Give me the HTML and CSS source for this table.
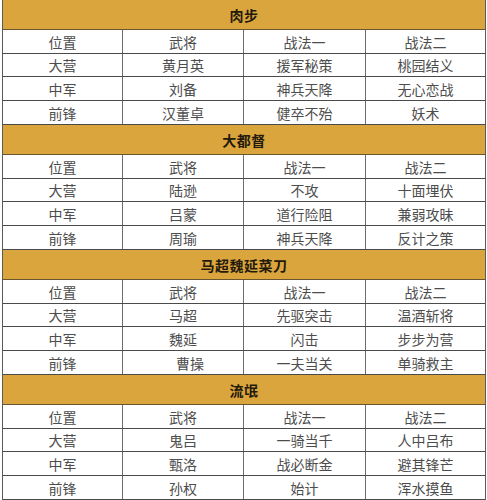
FILE: index.html
```html
<!DOCTYPE html>
<html lang="zh-CN">
<head>
<meta charset="utf-8">
<link rel="stylesheet" href="styles.css">
</head>
<body>
<div class="sheet">
  <section class="block">
    <div class="head">肉步</div>
    <div class="row r1"><span>位置</span><span>武将</span><span>战法一</span><span>战法二</span></div>
    <div class="row r2"><span>大营</span><span>黄月英</span><span>援军秘策</span><span>桃园结义</span></div>
    <div class="row r3"><span>中军</span><span>刘备</span><span>神兵天降</span><span>无心恋战</span></div>
    <div class="row r4"><span>前锋</span><span>汉董卓</span><span>健卒不殆</span><span>妖术</span></div>
  </section>
  <section class="block">
    <div class="head">大都督</div>
    <div class="row r1"><span>位置</span><span>武将</span><span>战法一</span><span>战法二</span></div>
    <div class="row r2"><span>大营</span><span>陆逊</span><span>不攻</span><span>十面埋伏</span></div>
    <div class="row r3"><span>中军</span><span>吕蒙</span><span>道行险阻</span><span>兼弱攻昧</span></div>
    <div class="row r4"><span>前锋</span><span>周瑜</span><span>神兵天降</span><span>反计之策</span></div>
  </section>
  <section class="block">
    <div class="head">马超魏延菜刀</div>
    <div class="row r1"><span>位置</span><span>武将</span><span>战法一</span><span>战法二</span></div>
    <div class="row r2"><span>大营</span><span>马超</span><span>先驱突击</span><span>温酒斩将</span></div>
    <div class="row r3"><span>中军</span><span>魏延</span><span>闪击</span><span>步步为营</span></div>
    <div class="row r4"><span>前锋</span><span class="shift">曹操</span><span>一夫当关</span><span>单骑救主</span></div>
  </section>
  <section class="block">
    <div class="head">流氓</div>
    <div class="row r1"><span>位置</span><span>武将</span><span>战法一</span><span>战法二</span></div>
    <div class="row r2"><span>大营</span><span>鬼吕</span><span>一骑当千</span><span>人中吕布</span></div>
    <div class="row r3"><span>中军</span><span>甄洛</span><span>战必断金</span><span>避其锋芒</span></div>
    <div class="row r4"><span>前锋</span><span>孙权</span><span>始计</span><span>浑水摸鱼</span></div>
  </section>
</div>
</body>
</html>
```

FILE: styles.css
```css
* { box-sizing: border-box; }
html, body { margin: 0; padding: 0; background: #ffffff; }
body {
  font-family: "Noto Sans CJK SC", "Noto Sans", sans-serif;
  overflow: hidden;
}
.sheet {
  margin-left: 2px;
  width: 484px;
  border-left: 1px solid #5a5a5a;
  border-right: 1px solid #5a5a5a;
}
.block { display: flex; flex-direction: column; }
.head {
  height: 30px;
  background: #dba53e;
  border-bottom: 1px solid #6b5530;
  display: flex;
  align-items: center;
  justify-content: center;
  font-size: 14px;
  font-weight: 700;
  color: #231a0c;
  letter-spacing: 0.5px;
}
.row {
  display: grid;
  grid-template-columns: 120px 121px 122px 119px;
  border-bottom: 1px solid #4a4a4a;
  font-size: 14px;
  color: #4d4d4d;
}
.row.r1 { height: 24px; }
.row.r2 { height: 23px; }
.row.r3 { height: 24px; }
.row.r4 { height: 24px; }
.row span {
  display: flex;
  align-items: center;
  justify-content: center;
  border-right: 1px solid #6e6e6e;
  line-height: 1;
}
.row span:last-child { border-right: none; }
.row span.shift { padding-left: 14px; }
```
